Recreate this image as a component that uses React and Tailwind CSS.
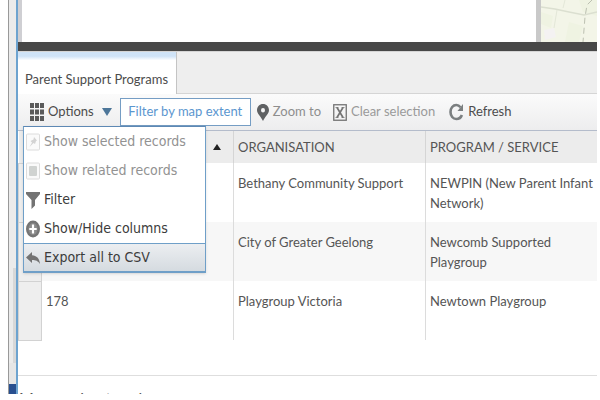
const COLUMNS = ["ORGANISATION", "PROGRAM / SERVICE"];

const ROWS = [
  { id: "", organisation: "Bethany Community Support", program: "NEWPIN (New Parent Infant Network)" },
  { id: "", organisation: "City of Greater Geelong", program: "Newcomb Supported Playgroup" },
  { id: "178", organisation: "Playgroup Victoria", program: "Newtown Playgroup" },
];

const MENU_ITEMS = [
  { label: "Show selected records", icon: SelectedIcon, disabled: true },
  { label: "Show related records", icon: RelatedIcon, disabled: true },
  { label: "Filter", icon: FilterIcon },
  { label: "Show/Hide columns", icon: ColumnsIcon },
  { label: "Export all to CSV", icon: ExportIcon, active: true },
];

function GridIcon() {
  return (
    <svg viewBox="0 0 14 18" preserveAspectRatio="none" className="w-[14px] h-[18px] shrink-0" fill="#5a5a5a">
      {[0, 5, 10].map((x) =>
        [0, 6.5, 13].map((y) => <rect key={`${x}-${y}`} x={x} y={y} width="4" height="5" />)
      )}
    </svg>
  );
}

function PinIcon() {
  return (
    <svg viewBox="0 0 12 17" className="w-[12px] h-[17px] shrink-0" fill="#5f6163">
      <path fillRule="evenodd" d="M6 0C2.6 0 0 2.7 0 6.2C0 9.8 4 12.5 6 17C8 12.5 12 9.8 12 6.2C12 2.7 9.4 0 6 0ZM6 3.9A2 2.3 0 1 1 6 8.5A2 2.3 0 1 1 6 3.9Z" />
    </svg>
  );
}

function ClearIcon() {
  return (
    <svg viewBox="0 0 14 17" className="w-[14px] h-[17px] shrink-0" fill="none" stroke="#737373">
      <rect x="0.75" y="0.75" width="12.5" height="15.5" strokeWidth="1.3" />
      <path d="M4 3.5L10 13.5M10 3.5L4 13.5" strokeWidth="1.7" />
      <path d="M2.5 3.5H5.5M8.5 3.5H11.5M2.5 13.5H5.5M8.5 13.5H11.5" strokeWidth="0.8" />
    </svg>
  );
}

function RefreshIcon() {
  return (
    <svg viewBox="0 0 15 18" className="w-[15px] h-[18px] shrink-0" fill="none" stroke="#7b7f80">
      <path d="M11.5 4.2C10.3 2.7 9 2 7.3 2C4 2 1.5 5 1.5 9C1.5 13 4 16 7.3 16C9.8 16 12 14.5 12.9 12" strokeWidth="2.6" />
      <path d="M14 1V8H8.5Z" fill="#7b7f80" stroke="none" />
    </svg>
  );
}

function SelectedIcon() {
  return (
    <svg viewBox="0 0 14 18" className="w-[14px] h-[18px] shrink-0">
      <rect x="0.5" y="1" width="13" height="16" rx="1" fill="#fafafa" stroke="#dcdcdc" />
      <path d="M8 4L11 7.5L10 8L9 11L7.5 10L3.5 14L6 9.5L4.5 8L7.5 6.5Z" fill="#d3d3d3" />
    </svg>
  );
}

function RelatedIcon() {
  return (
    <svg viewBox="0 0 14 18" className="w-[14px] h-[18px] shrink-0">
      <rect x="0.5" y="1" width="13" height="16" rx="1" fill="#fafafa" stroke="#dcdcdc" />
      <rect x="3" y="4" width="8" height="10" rx="1" fill="#d0d3d1" />
    </svg>
  );
}

function FilterIcon() {
  return (
    <svg viewBox="0 0 14 18" className="w-[14px] h-[18px] shrink-0" fill="#737373">
      <path d="M0 1H14V3L9 9V14.5L5.5 18V9L0 3Z" />
    </svg>
  );
}

function ColumnsIcon() {
  return (
    <svg viewBox="0 0 14 18" className="w-[14px] h-[18px] shrink-0">
      <ellipse cx="7" cy="9" rx="7" ry="8.5" fill="#757575" />
      <ellipse cx="7" cy="9" rx="4.6" ry="6" fill="#8b8b8b" />
      <path d="M7 4.5V13.5M3.3 9H10.7" stroke="#fff" strokeWidth="2.2" />
    </svg>
  );
}

function ExportIcon() {
  return (
    <svg viewBox="0 0 14 18" className="w-[14px] h-[18px] shrink-0" fill="#737373">
      <path d="M0 8.5L6 3V6.3C10.5 6.5 13.5 9.5 14 15C12 11.8 9.8 10.9 6 10.9V14Z" />
    </svg>
  );
}

function MapPreview() {
  return (
    <svg viewBox="0 0 56 42" preserveAspectRatio="none" className="w-[56px] h-[42px]" fill="none">
      <rect width="56" height="42" fill="#f3f5e8" />
      <path d="M38 0L56 0V16L42 12ZM0 12L12 16L10 28L0 24ZM28 22L42 26L38 42H24Z" fill="#eff3e2" />
      <path d="M3 30L13 28L15 37L4 40Z" fill="#f4f2f2" />
      <path d="M0 7L14 9L28 12L43 15L56 12" stroke="#dbdfd0" strokeWidth="1.5" />
      <path d="M16 10L13 28M24 0L22 8" stroke="#e3e7d8" />
      <path d="M51 0L46 5L44 17L42 42" stroke="#bcc0b1" strokeDasharray="6 4" />
    </svg>
  );
}

function OptionsMenu() {
  return (
    <ul
      role="menu"
      className="absolute left-[5px] top-8 z-10 w-[183px] border border-[#6f9fc8] border-b-2 border-t-[#5d88b4] bg-white shadow-sm text-[14px] [font-family:'DejaVu_Sans_Condensed','DejaVu_Sans',sans-serif]"
    >
      {MENU_ITEMS.map(({ label, icon: Icon, disabled, active }) => (
        <li key={label} role="none">
          <button
            role="menuitem"
            disabled={disabled}
            className={`flex w-full items-center gap-1 whitespace-nowrap pl-[2px] text-left ${
              disabled ? "text-[#929292]" : "text-[#3c3c3c]"
            } ${active ? "h-7 border-t border-[#6f9fc8] bg-linear-to-b from-[#eceef1] to-[#d5dbe0]" : "h-[29px]"}`}
          >
            <Icon />
            {label}
          </button>
        </li>
      ))}
    </ul>
  );
}

function Toolbar() {
  return (
    <div className="relative flex h-[37px] items-center whitespace-nowrap border-b border-[#b4bccb] bg-linear-to-b from-[#fbfbfb] to-[#ededee] pl-3 text-[#4c4c4c]">
      <button className="flex items-center gap-1" aria-haspopup="menu" aria-expanded="true">
        <GridIcon />
        Options
        <svg viewBox="0 0 10 8" className="ml-1 h-2 w-[10px]" fill="#4d7699">
          <path d="M0 0H10L5 8Z" />
        </svg>
      </button>
      <button className="ml-2 h-7 w-[131px] border border-[#759dc4] bg-white text-[#5b96cf]">
        Filter by map extent
      </button>
      <button className="ml-[6px] flex items-center gap-1 text-[#8e8e8e]">
        <PinIcon />
        Zoom to
      </button>
      <button className="ml-3 flex items-center gap-1 text-[#9a9a9a]">
        <ClearIcon />
        Clear selection
      </button>
      <button className="ml-3.5 flex items-center gap-1">
        <RefreshIcon />
        Refresh
      </button>
      <OptionsMenu />
    </div>
  );
}

function ProgramsTable() {
  return (
    <table className="w-full table-fixed border-collapse text-left text-[#555555]">
      <colgroup>
        <col className="w-[23px]" />
        <col className="w-[192px]" />
        <col className="w-[192px]" />
        <col />
      </colgroup>
      <thead>
        <tr className="h-8 bg-[#ececec]">
          <th />
          <th aria-sort="ascending" className="border-r border-[#d5d5d5] pr-3">
            <svg viewBox="0 0 8 6" className="ml-auto h-[6px] w-2" fill="#222">
              <path d="M4 0L8 6H0Z" />
            </svg>
          </th>
          {COLUMNS.map((name) => (
            <th key={name} className="border-r border-[#d5d5d5] pl-1 pt-px font-normal last:border-r-0">
              {name}
            </th>
          ))}
        </tr>
      </thead>
      <tbody>
        {ROWS.map((row) => (
          <tr key={row.program} className="h-[59px] align-top leading-5 even:bg-[#f7f7f7]">
            <th className="border border-[#d2d2d2] bg-[#eeeeee]" />
            <td className="border-r border-[#dcdcdc] pl-1 pt-[10px]">{row.id}</td>
            <td className="border-r border-[#dcdcdc] pl-1 pt-[10px]">{row.organisation}</td>
            <td className="pl-1 pt-[10px]">{row.program}</td>
          </tr>
        ))}
      </tbody>
    </table>
  );
}

export default function App() {
  return (
    <div className="flex bg-white pl-2 pr-[3px] text-[13px] [font-family:Lato,sans-serif]">
      <div className="flex w-2 shrink-0 flex-col border-l border-[#999999] bg-[#ebebeb]">
        <div className="flex-1" />
        <div className="ml-1 h-[95px] bg-[#d8d8d8]" />
        <div className="h-[21px] bg-[#e6e6e6]" />
        <div className="h-[10px] bg-[#284f8f]" />
      </div>
      <div className="min-w-0 flex-1 border-l-2 border-[#6da3cf]">
        <div className="flex h-[42px] border-l-4 border-[#cfcfd3]">
          <div className="flex-1" />
          <div className="w-[5px] bg-[#c9c9c9]" />
          <MapPreview />
        </div>
        <div className="h-[9px] bg-[#474747]" />
        <div className="flex h-[43px] border-y border-[#d5d5d5] bg-[#eeeeee]">
          <button className="-mb-px w-[159px] whitespace-nowrap border-r border-[#c4c4c4] bg-linear-to-b from-[#cfe3f7] from-10% to-white to-20% pl-[7px] pt-3.5 text-left text-[#4c4c4c]">
            Parent Support Programs
          </button>
        </div>
        <Toolbar />
        <div className="h-[245px] border-b border-[#dedede]">
          <ProgramsTable />
        </div>
        {/* collapsed section, only the top of its heading peeks out */}
        <div className="h-[18px] overflow-hidden pl-px pt-3">
          <h2 className="text-[16px] leading-5 text-[#555555]">Managed network</h2>
        </div>
      </div>
    </div>
  );
}
